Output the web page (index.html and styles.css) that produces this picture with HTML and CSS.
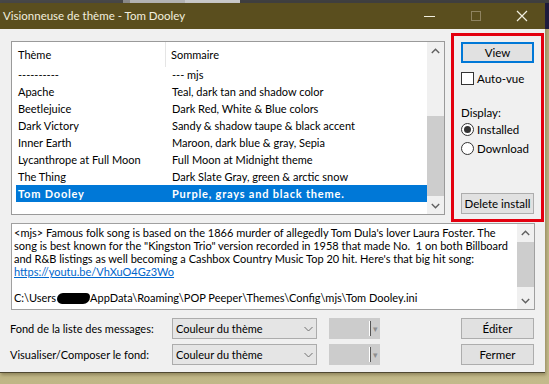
FILE: index.html
```html
<!DOCTYPE html>
<html lang="fr">
<head>
  <meta charset="UTF-8">
  <title>Visionneuse de thème - Tom Dooley</title>
  <link rel="stylesheet" href="styles.css">
</head>
<body>

  <div class="topstrip"></div>

  <div class="desk">
    <div class="window">

      <div class="titlebar">
        <span class="title">Visionneuse de thème - Tom Dooley</span>
        <div class="caption">
          <svg class="cap-min" width="12" height="12" viewBox="0 0 12 12"><line x1="0" y1="6.5" x2="11" y2="6.5" stroke="#f2efdf" stroke-width="1"/></svg>
          <svg class="cap-max" width="12" height="12" viewBox="0 0 12 12"><rect x="1.5" y="1.5" width="9" height="9" fill="none" stroke="#8f8360" stroke-width="1"/></svg>
          <svg class="cap-close" width="12" height="12" viewBox="0 0 12 12"><path d="M1 1 L11 11 M11 1 L1 11" stroke="#f2efdf" stroke-width="1.2"/></svg>
        </div>
      </div>

      <div class="client">
        <div class="top">
          <!-- liste des thèmes -->
          <div class="listview">
            <div class="lv-main">
              <div class="lv-head">
                <div class="lv-hcell sep">Thème</div>
                <div class="lv-hcell">Sommaire</div>
              </div>
              <div class="lv-row"><span>----------</span><span>--- mjs</span></div>
              <div class="lv-row"><span>Apache</span><span>Teal, dark tan and shadow color</span></div>
              <div class="lv-row"><span>Beetlejuice</span><span>Dark Red, White &amp; Blue colors</span></div>
              <div class="lv-row"><span>Dark Victory</span><span>Sandy &amp; shadow taupe &amp; black accent</span></div>
              <div class="lv-row"><span>Inner Earth</span><span>Maroon, dark blue &amp; gray, Sepia</span></div>
              <div class="lv-row"><span>Lycanthrope at Full Moon</span><span>Full Moon at Midnight theme</span></div>
              <div class="lv-row"><span>The Thing</span><span>Dark Slate Gray, green &amp; arctic snow</span></div>
              <div class="lv-row selected"><span>Tom Dooley</span><span>Purple, grays and black theme.</span></div>
            </div>
            <div class="vscroll">
              <div class="arrow"><svg width="9" height="6" viewBox="0 0 9 6"><polyline points="0.8,5 4.5,1.3 8.2,5" fill="none" stroke="#606060" stroke-width="1.4"/></svg></div>
              <div class="track"><div class="thumb list-thumb"></div></div>
              <div class="arrow"><svg width="9" height="6" viewBox="0 0 9 6"><polyline points="0.8,1 4.5,4.7 8.2,1" fill="none" stroke="#606060" stroke-width="1.4"/></svg></div>
            </div>
          </div>

          <!-- colonne de droite -->
          <div class="side">
            <div class="mark"></div>
            <button class="btn default">View</button>
            <div class="check"><span class="box"></span>Auto-vue</div>
            <div class="group-label">Display:</div>
            <div class="radio"><span class="dot on"></span>Installed</div>
            <div class="radio"><span class="dot"></span>Download</div>
            <button class="btn delete">Delete install</button>
          </div>
        </div>

        <!-- description -->
        <div class="memo">
          <div class="memo-text">
            &lt;mjs&gt; Famous folk song is based on the 1866 murder of allegedly Tom Dula's lover Laura Foster. The<br>
            song is best known for the "Kingston Trio" version recorded in 1958 that made No.&nbsp; 1 on both Billboard<br>
            and R&amp;B listings as well becoming a Cashbox Country Music Top 20 hit. Here's that big hit song:<br>
            <a href="#">https://youtu.be/VhXuO4Gz3Wo</a><br>
            <br>
            C:\Users<span class="blot"></span>AppData\Roaming\POP Peeper\Themes\Config\mjs\Tom Dooley.ini
          </div>
          <div class="vscroll">
            <div class="arrow"><svg width="9" height="6" viewBox="0 0 9 6"><polyline points="0.8,5 4.5,1.3 8.2,5" fill="none" stroke="#606060" stroke-width="1.4"/></svg></div>
            <div class="track"><div class="thumb memo-thumb"></div></div>
            <div class="arrow"><svg width="9" height="6" viewBox="0 0 9 6"><polyline points="0.8,1 4.5,4.7 8.2,1" fill="none" stroke="#606060" stroke-width="1.4"/></svg></div>
          </div>
        </div>

        <!-- fonds -->
        <div class="options">
          <div class="opt-label">Fond de la liste des messages:</div>
          <div class="combo">Couleur du thème<svg width="9" height="6" viewBox="0 0 9 6"><polyline points="0.5,1 4.5,5 8.5,1" fill="none" stroke="#707070" stroke-width="1"/></svg></div>
          <div></div>
          <div class="combo-off"><span class="caret"></span><span class="tri">▾</span></div>
          <div></div>
          <button class="btn">Éditer</button>

          <div class="opt-label">Visualiser/Composer le fond:</div>
          <div class="combo">Couleur du thème<svg width="9" height="6" viewBox="0 0 9 6"><polyline points="0.5,1 4.5,5 8.5,1" fill="none" stroke="#707070" stroke-width="1"/></svg></div>
          <div></div>
          <div class="combo-off"><span class="caret"></span><span class="tri">▾</span></div>
          <div></div>
          <button class="btn">Fermer</button>
        </div>
      </div>

    </div>
    <div class="edge"></div>
  </div>

</body>
</html>
```

FILE: styles.css
```css
/* Bureau */
body {
  margin: 0;
  width: 549px;
  height: 384px;
  overflow: hidden;
  font-family: 'Lato', 'Noto Sans', sans-serif;
  font-size: 11px;
  color: #000;
  background: linear-gradient(170deg, #b0a672, #c3ba8b);
}
.topstrip {
  height: 3px;
  background: linear-gradient(to right, #474747 0 123px, #8a8a8a 123px 130px, #b3b3b3 130px 185px, #c9c9c9 185px 240px, #3f3f3f 240px);
}
.desk {
  display: flex;
}
.edge {
  width: 4px;
  height: 26px;
  background: #1e1b3d;
}
/* Fenêtre */
.window {
  width: 545px;
  background: #f0f0f0;
  border-bottom: 1px solid #4f4832;
  box-shadow: 1px 2px 3px rgba(60, 50, 20, 0.35);
}
.titlebar {
  height: 26px;
  background: #5a4e1e;
  color: #f2efdf;
  display: flex;
  align-items: center;
  padding-left: 3px;
}
.title {
  flex: 1;
  font-size: 11.5px;
  padding-bottom: 1px;
}
.caption {
  display: flex;
  align-items: center;
  padding-bottom: 1px;
}
.cap-min { margin-right: 34px; }
.cap-max { margin-right: 34px; }
.cap-close { margin-right: 17px; }

.client {
  height: 343px;
  padding-top: 12px;
  box-sizing: border-box;
}
.top {
  display: flex;
  align-items: flex-start;
}
/* Liste */
.listview {
  margin-left: 11px;
  width: 434px;
  height: 174px;
  box-sizing: border-box;
  border: 1px solid #9a9a9a;
  background: #fff;
  display: flex;
}
.lv-main {
  flex: 1;
}
.lv-head {
  display: grid;
  grid-template-columns: 154px 1fr;
  height: 24px;
  line-height: 25px;
}
.lv-hcell {
  padding-left: 6px;
}
.lv-hcell.sep {
  border-right: 1px solid #e5e5e5;
}
.lv-hcell + .lv-hcell {
  padding-left: 5px;
}
.lv-row {
  display: grid;
  grid-template-columns: 150px 1fr;
  height: 17px;
  line-height: 17px;
  margin-left: 4px;
  white-space: nowrap;
}
.lv-row span:first-child { padding-left: 2px; }
.lv-row span:last-child { padding-left: 6px; }
.lv-row.selected {
  background: #0078d7;
  color: #fff;
  font-weight: bold;
  letter-spacing: 0.8px;
}
/* Barres de défilement */
.vscroll {
  width: 17px;
  background: #f0f0f0;
  display: flex;
  flex-direction: column;
}
.arrow {
  height: 17px;
  display: flex;
  align-items: center;
  justify-content: center;
}
.track {
  flex: 1;
  display: flex;
  flex-direction: column;
}
.thumb {
  background: #cdcdcd;
}
.list-thumb {
  margin-top: auto;
  height: 80px;
  margin-bottom: 1px;
}
.memo-thumb {
  margin-top: 1px;
  height: 45px;
}
/* Colonne de droite */
.side {
  position: relative;
  margin-left: 16px;
  width: 73px;
  padding-top: 1px;
  display: flex;
  flex-direction: column;
}
.mark {
  position: absolute;
  left: -10px;
  top: -8px;
  width: 93px;
  height: 189px;
  box-sizing: border-box;
  border: 3px solid #e3000f;
}
.btn {
  width: 73px;
  height: 21px;
  box-sizing: border-box;
  border: 1px solid #adadad;
  background: #e1e1e1;
  font-family: inherit;
  font-size: 11.5px;
  color: #000;
  padding: 0;
  white-space: nowrap;
}
.btn.default {
  border-color: #0078d7;
  box-shadow: inset 0 0 0 1px #0078d7;
}
.check {
  margin-top: 9px;
  height: 13px;
  line-height: 13px;
  display: flex;
  align-items: center;
  font-size: 11.5px;
}
.box {
  width: 13px;
  height: 13px;
  box-sizing: border-box;
  border: 1px solid #333;
  background: #fff;
  margin-right: 3px;
}
.group-label {
  margin-top: 20px;
  height: 15px;
  line-height: 15px;
  font-size: 11.5px;
}
.radio {
  height: 19px;
  display: flex;
  align-items: center;
  font-size: 11.5px;
}
.dot {
  width: 13px;
  height: 13px;
  box-sizing: border-box;
  border: 1px solid #333;
  border-radius: 50%;
  background: #fff;
  margin-right: 3px;
  display: flex;
  align-items: center;
  justify-content: center;
}
.dot.on::after {
  content: "";
  width: 7px;
  height: 7px;
  border-radius: 50%;
  background: #333;
}
.btn.delete {
  margin-top: 35px;
}
/* Zone de texte */
.memo {
  margin: 8px 0 0 11px;
  width: 524px;
  height: 87px;
  box-sizing: border-box;
  border: 1px solid #a0a0a0;
  background: #fff;
  display: flex;
}
.memo-text {
  flex: 1;
  padding: 2px 0 0 2px;
  line-height: 13px;
  white-space: nowrap;
  overflow: hidden;
}
.memo-text a {
  color: #0066cc;
}
.blot {
  display: inline-block;
  width: 33px;
  height: 11px;
  margin: 0 0 -2px 1px;
  background: #000;
  border-radius: 6px 4px 7px 5px;
}
/* Options du bas */
.options {
  margin-top: 8px;
  padding-left: 10px;
  display: grid;
  grid-template-columns: 162px 145px 12px 51px 81px 73px;
  grid-auto-rows: 21px;
  row-gap: 5px;
  align-items: center;
}
.opt-label {
  white-space: nowrap;
}
.combo {
  height: 21px;
  box-sizing: border-box;
  border: 1px solid #acacac;
  background: #e5e5e5;
  padding: 0 3px 0 3px;
  display: flex;
  align-items: center;
  justify-content: space-between;
}
.combo-off {
  height: 21px;
  background: #cccccc;
  display: flex;
  align-items: center;
  justify-content: flex-end;
}
.caret {
  width: 1px;
  height: 15px;
  background: #555;
  box-shadow: -1px 0 0 #fff;
  margin-right: 2px;
}
.tri {
  color: #8e8e8e;
  font-size: 9px;
  margin-right: 2px;
}
```
